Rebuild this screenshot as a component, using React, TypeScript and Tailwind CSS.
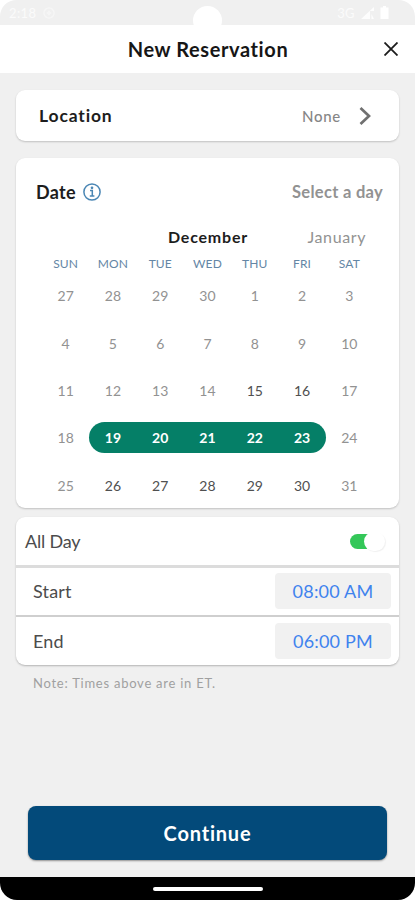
import clsx from 'clsx';

const weekdays = ['SUN', 'MON', 'TUE', 'WED', 'THU', 'FRI', 'SAT'];

const weeks = [
  [27, 28, 29, 30, 1, 2, 3],
  [4, 5, 6, 7, 8, 9, 10],
  [11, 12, 13, 14, 15, 16, 17],
  [18, 19, 20, 21, 22, 23, 24],
  [25, 26, 27, 28, 29, 30, 31],
];

const dayClass = (week: number, col: number) => {
  const weekday = col > 0 && col < 6;
  if (week === 3 && weekday) {
    return clsx(
      'bg-[#057f67] font-bold text-white',
      col === 1 && 'rounded-l-full',
      col === 5 && 'rounded-r-full'
    );
  }
  if ((week === 4 && weekday) || (week === 2 && (col === 4 || col === 5))) return 'text-[#505050]';
  return 'text-[#929292]';
};

const StatusBar = () => (
  <div className="relative flex h-[25px] justify-between bg-[#f0f0f0] pr-[26px] pl-[9px] text-[13px] leading-[26px] tracking-[0.4px] text-[#fbfbfb]">
    <div className="flex items-center gap-[7px]">
      <span>2:18</span>
      <svg width="12" height="12" viewBox="0 0 13 13" fill="none" stroke="#f6f6f6" strokeWidth="1.5">
        <circle cx="6.5" cy="6.5" r="5.5" />
        <path d="M4 6.5h5M6.5 4v5" />
      </svg>
    </div>
    <div className="flex items-center gap-[6px]">
      <span>3G</span>
      <svg width="13" height="12" viewBox="0 0 13 12" fill="#fdfdfd">
        <path d="M0 12 13 0v4H9v8H0Zm10.500-5 2.500 5h-2.500Z" />
      </svg>
      <svg width="9" height="13" viewBox="0 0 9 13" fill="#fff">
        <path d="M3 0h3v1.500h2.500V13h-8V1.500H3Z" />
      </svg>
    </div>
    <div className="absolute top-[6px] left-[193px] h-[29px] w-[29px] rounded-full bg-white" />
    <svg className="absolute top-0 left-0" width="17" height="17" viewBox="0 0 17 17" fill="#fff">
      <path d="M0 0h17C7 0 0 7 0 17Z" />
    </svg>
    <svg className="absolute top-0 right-0" width="17" height="17" viewBox="0 0 17 17" fill="#fff">
      <path d="M17 0H0c10 0 17 7 17 17Z" />
    </svg>
  </div>
);

const Header = () => (
  <header className="relative flex h-12 items-center justify-center bg-white">
    <h1 className="pl-px text-[20px] font-bold tracking-[0.6px] text-[#161616]">New Reservation</h1>
    <svg className="absolute top-[17px] right-[17px]" width="14" height="14" viewBox="0 0 14 14" stroke="#1c1c1c" strokeWidth="1.8">
      <path d="m.5.5 13 13m0-13-13 13" />
    </svg>
  </header>
);

const LocationCard = () => (
  <section className="mx-4 mt-[17px] flex h-[51px] items-center justify-between rounded-[9px] bg-white pr-[28px] pl-[23px] shadow-[0_1px_2px_rgba(0,0,0,0.2)]">
    <span className="pt-[2px] text-[17.5px] font-bold tracking-[0.85px] text-[#1d1d1d]">Location</span>
    <div className="flex items-center gap-[18px]">
      <span className="pt-px text-[15px] font-medium tracking-[0.7px] text-[#868686]">None</span>
      <svg width="12" height="18" viewBox="0 0 12 18" fill="none" stroke="#707070" strokeWidth="2.700">
        <path d="m1.500 1 8.500 8-8.500 8" />
      </svg>
    </div>
  </section>
);

const DateCard = () => (
  <section className="mx-4 mt-[17px] h-[350px] rounded-[9px] bg-white px-[26px] shadow-[0_1px_2px_rgba(0,0,0,0.2)]">
    <div className="-mr-[10px] -ml-[6px] flex h-[68px] items-center justify-between">
      <div className="flex items-center gap-[7px]">
        <h2 className="text-[18px] font-bold tracking-[0.3px] text-[#1d1d1d]">Date</h2>
        <svg width="18" height="18" viewBox="0 0 18 18" fill="none" stroke="#4a86b4" strokeWidth="1.500">
          <circle cx="9" cy="9" r="8.100" />
          <path d="M7 7.500h2.300V13M6.800 13h4.600" />
          <circle cx="9" cy="4.800" r="0.600" fill="#4a86b4" />
        </svg>
      </div>
      <span className="pt-px text-[16.5px] font-bold tracking-[0.3px] text-[#929292]">Select a day</span>
    </div>
    <div className="-mt-px grid h-[24px] grid-cols-[126px_80px_126px] items-center text-center">
      <span className="col-start-2 justify-self-center text-[16px] font-bold tracking-[0.8px] text-[#1d1d1d]">December</span>
      <span className="pr-[8px] text-right text-[16px] tracking-[0.6px] text-[#929292]">January</span>
    </div>
    <div className="mt-[5px] grid grid-cols-7 text-center text-[12px] leading-[20px] tracking-[0.1px] text-[#6486a5]">
      {weekdays.map((day) => (
        <span key={day}>{day}</span>
      ))}
    </div>
    <div className="-mt-[2px]">
      {weeks.map((week, i) => (
        <div key={i} className="grid h-[47.400px] grid-cols-7 items-center">
          {week.map((day, col) => (
            <div key={col} className={clsx('text-center text-[14px] leading-[31px]', dayClass(i, col))}>
              {day}
            </div>
          ))}
        </div>
      ))}
    </div>
  </section>
);

const TimeRow = ({ label, time }: { label: string; time: string }) => (
  <div className="flex h-[48px] items-center justify-between pr-[8px] pl-[17px]">
    <span>{label}</span>
    <span className="flex h-[36px] w-[116px] items-center justify-center rounded-[4px] bg-[#f1f1f1] text-[#3f83ee]">{time}</span>
  </div>
);

const TimesCard = () => (
  <section className="mx-4 mt-[9px] h-[148px] rounded-[9px] bg-white text-[18px] tracking-[0.2px] text-[#4c4c4c] shadow-[0_1px_2px_rgba(0,0,0,0.25)]">
    <div className="flex h-[48px] items-center justify-between pt-px pr-[14px] pl-[9px]">
      <span className="tracking-[-0.2px]">All Day</span>
      <div className="relative h-[15px] w-[35px]">
        <div className="h-[15px] w-[26px] rounded-full bg-[#34c759]" />
        <div className="absolute -top-[2px] right-0 h-[19px] w-[21px] rounded-full bg-white shadow-[1px_1px_1px_rgba(0,0,0,0.06)]" />
      </div>
    </div>
    <div className="-mb-px h-[3px] bg-[#dcdcdc]" />
    <TimeRow label="Start" time="08:00 AM" />
    <div className="h-[2px] bg-[#cfcfcf]" />
    <TimeRow label="End" time="06:00 PM" />
  </section>
);

export default function App() {
  return (
    <main className="flex h-[900px] w-[415px] flex-col overflow-hidden bg-[#f0f0f0] font-['Lato',sans-serif]">
      <StatusBar />
      <Header />
      <LocationCard />
      <DateCard />
      <TimesCard />
      <p className="mt-[8px] ml-[33px] text-[13px] leading-[20px] tracking-[0.75px] text-[#a0a0a0]">Note: Times above are in ET.</p>
      <button className="mx-[28px] mt-auto mb-[17px] h-[54px] rounded-[8px] bg-[#034a7a] text-[20px] font-bold tracking-[0.8px] text-white shadow-[0_1px_2px_rgba(0,0,0,0.4)]">
        Continue
      </button>
      <div className="h-[23px] shrink-0 bg-white">
        <div className="flex h-full justify-center rounded-b-[17px] bg-black pt-[10px]">
          <div className="h-[4px] w-[110px] rounded-full bg-white" />
        </div>
      </div>
    </main>
  );
}
